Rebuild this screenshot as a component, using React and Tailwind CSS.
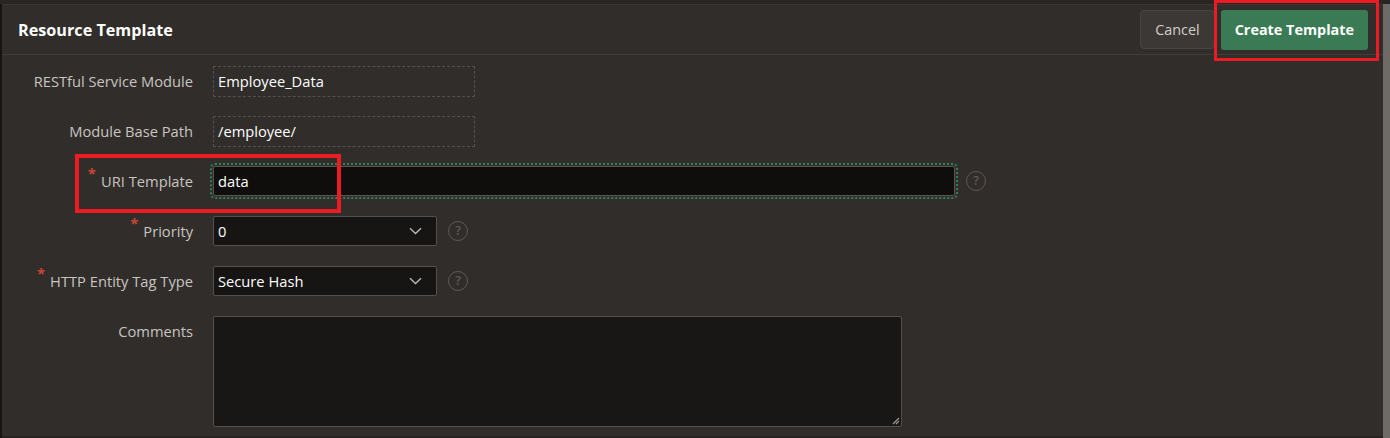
import React from "react";

const font = { fontFamily: '"Open Sans", "Noto Sans", Arial, sans-serif' };

function Help() {
  return (
    <div className="ml-[11px] flex h-[20px] w-[20px] items-center justify-center rounded-full border-[1.5px] border-[#5e5955] text-[12.5px] font-semibold leading-none text-[#5e5955]">
      ?
    </div>
  );
}

function Chevron() {
  return (
    <svg width="13" height="8" viewBox="0 0 13 8" fill="none" className="mr-[14px]">
      <path d="M1 1.2L6.5 6.5L12 1.2" stroke="#bdb8b3" strokeWidth="1.4" />
    </svg>
  );
}

function Label({ children, required }) {
  return (
    <div className="flex w-[191px] shrink-0 justify-end text-[14.7px] leading-[30px] text-[#c8c4c0]">
      {required && (
        <span className="relative top-[-8px] mr-[5px] text-[15px] font-bold leading-[30px] text-[#c74634]">*</span>
      )}
      <span>{children}</span>
    </div>
  );
}

export default function App() {
  return (
    <div className="relative h-[438px] w-[1390px] overflow-hidden bg-[#2b2826]" style={font}>
      <div className="h-[4px] bg-[#282523]" />
      <div className="flex h-[434px]">
        <div className="w-[2px] shrink-0 bg-[#171513]" />
        <div className="flex w-[1381px] flex-col border-t border-[#3a3633] bg-[#312d2a]">
          {/* header */}
          <div className="flex h-[50px] items-center justify-between border-b border-[#423d39] pl-[16px] pr-[15px]">
            <div className="pt-[2px] text-[16.2px] font-bold text-white">Resource Template</div>
            <div className="flex items-center gap-[6px]">
              <button className="h-[39px] rounded-[4px] border border-[#4a4541] bg-[#3c3835] px-[14px] text-[14.4px] text-[#d2ceca]">
                Cancel
              </button>
              <button className="h-[40px] rounded-[3px] bg-[#3a7b55] px-[14px] text-[14.4px] font-bold text-white">
                Create Template
              </button>
            </div>
          </div>
          {/* body */}
          <div className="flex flex-col gap-[20px] pt-[11px]">
            <div className="flex h-[30px] items-center">
              <Label>RESTful Service Module</Label>
              <div className="ml-[20px] flex h-[31px] w-[262px] items-center border border-dashed border-[#55504c] pl-[4px] text-[14.7px] text-white">
                Employee_Data
              </div>
            </div>
            <div className="flex h-[30px] items-center">
              <Label>Module Base Path</Label>
              <div className="ml-[20px] flex h-[31px] w-[262px] items-center border border-dashed border-[#55504c] pl-[4px] text-[14.7px] text-white">
                /employee/
              </div>
            </div>
            <div className="flex h-[30px] items-center">
              <Label required>URI Template</Label>
              <div className="ml-[20px] flex h-[30px] w-[742px] items-center rounded-[2px] border border-[#5a5550] bg-[#0f0e0d] pl-[4px] text-[14.7px] text-white outline-2 outline-offset-[1px] outline-dotted outline-[#2f7f58]">
                data
              </div>
              <Help />
            </div>
            <div className="flex h-[30px] items-center">
              <Label required>Priority</Label>
              <div className="ml-[20px] flex h-[30px] w-[224px] items-center justify-between rounded-[2px] border border-[#55504c] bg-[#171513] pl-[4px] text-[14.7px] text-white">
                <span>0</span>
                <Chevron />
              </div>
              <Help />
            </div>
            <div className="flex h-[30px] items-center">
              <Label required>HTTP Entity Tag Type</Label>
              <div className="ml-[20px] flex h-[30px] w-[224px] items-center justify-between rounded-[2px] border border-[#55504c] bg-[#171513] pl-[4px] text-[14.7px] text-white">
                <span>Secure Hash</span>
                <Chevron />
              </div>
              <Help />
            </div>
            <div className="flex items-start">
              <Label>Comments</Label>
              <div className="relative ml-[20px] h-[111px] w-[689px] rounded-[2px] border border-[#55504c] bg-[#181715]">
                <svg width="8" height="8" viewBox="0 0 8 8" className="absolute bottom-[1px] right-[1px]">
                  <path d="M7 1L1 7M7 4L4 7" stroke="#9a9590" strokeWidth="1.3" />
                </svg>
              </div>
            </div>
          </div>
          <div className="mt-auto h-[2px] bg-[#262321]" />
        </div>
        <div className="w-[7px] shrink-0 bg-[#6e6a66]" />
      </div>
      {/* annotation overlays */}
      <div className="pointer-events-none absolute left-[1214px] top-0 h-[61px] w-[165px] border-[3px] border-[#ed1c24]" />
      <div className="pointer-events-none absolute left-[75px] top-[154px] h-[59px] w-[266px] border-[4px] border-[#ed1c24]" />
    </div>
  );
}
